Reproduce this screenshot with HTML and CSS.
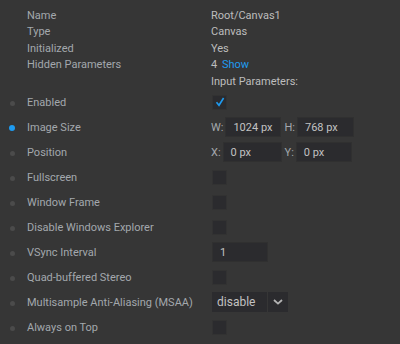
FILE: index.html
```html
<!DOCTYPE html>
<html lang="en">
<head>
    <meta charset="UTF-8">
    <title>Canvas Parameters</title>
    <link rel="stylesheet" href="styles.css">
</head>
<body>

    <div class="info">
        <div class="info-row"><span class="info-label">Name</span><span class="info-value">Root/Canvas1</span></div>
        <div class="info-row"><span class="info-label">Type</span><span class="info-value">Canvas</span></div>
        <div class="info-row"><span class="info-label">Initialized</span><span class="info-value">Yes</span></div>
        <div class="info-row"><span class="info-label">Hidden Parameters</span><span class="info-value">4 <a class="link" href="#">Show</a></span></div>
        <div class="info-row"><span class="info-label"></span><span class="info-value">Input Parameters:</span></div>
    </div>

    <div class="params">
        <div class="param">
            <span class="dot"></span>
            <span class="param-label">Enabled</span>
            <span class="check checked">
                <svg width="10" height="10" viewBox="0 0 10 10"><path d="M1.5 5.2 L4 8.3 L8.6 1" fill="none" stroke="#1e9bf0" stroke-width="1.6"/></svg>
            </span>
        </div>
        <div class="param">
            <span class="dot dot-active"></span>
            <span class="param-label">Image Size</span>
            <span class="pair">
                <span class="axis">W:</span><span class="field w56">1024 px</span>
                <span class="axis axis-2">H:</span><span class="field w57">768 px</span>
            </span>
        </div>
        <div class="param">
            <span class="dot"></span>
            <span class="param-label">Position</span>
            <span class="pair">
                <span class="axis">X:</span><span class="field w59">0 px</span>
                <span class="axis axis-2">Y:</span><span class="field w56">0 px</span>
            </span>
        </div>
        <div class="param">
            <span class="dot"></span>
            <span class="param-label">Fullscreen</span>
            <span class="check"></span>
        </div>
        <div class="param">
            <span class="dot"></span>
            <span class="param-label">Window Frame</span>
            <span class="check"></span>
        </div>
        <div class="param">
            <span class="dot"></span>
            <span class="param-label">Disable Windows Explorer</span>
            <span class="check"></span>
        </div>
        <div class="param">
            <span class="dot"></span>
            <span class="param-label">VSync Interval</span>
            <span class="field w56">1</span>
        </div>
        <div class="param">
            <span class="dot"></span>
            <span class="param-label">Quad-buffered Stereo</span>
            <span class="check"></span>
        </div>
        <div class="param">
            <span class="dot"></span>
            <span class="param-label">Multisample Anti-Aliasing (MSAA)</span>
            <span class="select">
                <span class="select-value">disable</span>
                <span class="select-arrow">
                    <svg width="10" height="6" viewBox="0 0 10 6"><path d="M1 1 L5 4.6 L9 1" fill="none" stroke="#b4b4b4" stroke-width="1.8"/></svg>
                </span>
            </span>
        </div>
        <div class="param">
            <span class="dot"></span>
            <span class="param-label">Always on Top</span>
            <span class="check"></span>
        </div>
        <div class="param">
            <span class="dot"></span>
            <span class="param-label"></span>
            <span class="button"></span>
        </div>
    </div>

</body>
</html>
```

FILE: styles.css
```css
body { margin: 0; padding-top: 7px; background-color: #363636; font-family: Roboto, "Liberation Sans", sans-serif; font-size: 11px; color: #a3a8ad; overflow: hidden; }
.info-row { display: flex; height: 16.5px; align-items: center; }
.info-label { width: 184px; padding-left: 27px; }
.info-value { color: #bdbdbd; }
.link { color: #1e9bf0; text-decoration: none; margin-left: 2px; }
.param { display: flex; align-items: center; height: 25px; }
.dot { width: 5px; height: 5px; border-radius: 50%; background-color: #4b4b4b; margin-left: 10px; margin-right: 12px; margin-top: 2px; }
.dot-active { width: 6px; height: 6px; margin-left: 9px; background-color: #1e9bf0; }
.param-label { width: 184px; }
.check { display: flex; align-items: center; justify-content: center; width: 13px; height: 13px; margin-left: 1px; background-color: #2b2b2e; border: 1px solid #323232; }
.pair { display: flex; align-items: center; color: #a3a8ad; }
.axis { margin-right: 2px; }
.axis-2 { margin-left: 3px; }
.field { display: flex; align-items: center; height: 20px; box-sizing: border-box; padding-left: 7px; background-color: #2b2b2e; border: 1px solid #303030; color: #c2c2c2; }
.w56 { width: 56px; }
.w57 { width: 57px; }
.w59 { width: 59px; }
.param > .field { margin-left: 1px; }
.select { display: flex; gap: 1px; margin-left: 1px; }
.select-value { display: flex; align-items: center; width: 55px; height: 20px; box-sizing: border-box; padding-left: 5px; background-color: #2b2b2e; color: #c2c2c2; font-size: 12px; }
.select-arrow { display: flex; align-items: center; justify-content: center; width: 20px; height: 20px; background-color: #2b2b2e; }
.button { width: 80px; height: 20px; margin-top: 5px; background-color: #2e2e30; border-top: 1px solid #525252; }
```
